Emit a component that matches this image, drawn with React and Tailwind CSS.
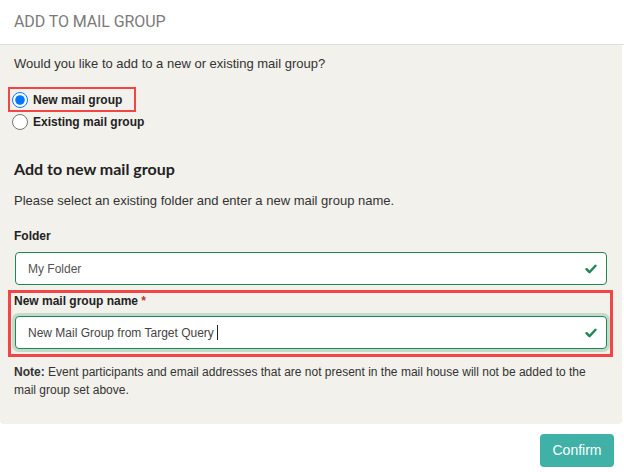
export default function App() {
  const check = (
    <svg width="12" height="10" viewBox="0 0 12 10" className="shrink-0">
      <path d="M1.5 5.2 L4.5 8.2 L10.5 1.8" fill="none" stroke="#1e8755" strokeWidth="2.4" strokeLinecap="round" strokeLinejoin="round" />
    </svg>
  );
  return (
    <div className="w-[624px] h-[472px] bg-white flex flex-col text-[#333] font-['Liberation_Sans',Arial,sans-serif]">
      <div className="h-[45px] shrink-0 border-b border-[#dedede] px-[14px] flex items-center">
        <span className="text-[16px] text-[#7b7b7b] font-['Roboto',sans-serif] tracking-[-0.1px]">ADD TO MAIL GROUP</span>
      </div>
      <div className="h-[379px] w-[622px] shrink-0 bg-[#f2f1ec] rounded-b-[4px] px-[14px] pt-[10px]">
        <div className="text-[13px] leading-[18px]">Would you like to add to a new or existing mail group?</div>
        <div className="mt-[14px] flex flex-col">
          <div className="self-start -ml-[6px] h-[25px] w-[128px] border-2 border-[#f24545] pl-[2px] flex items-center">
            <input type="radio" checked readOnly className="m-0 w-[16px] h-[16px]" />
            <span className="ml-[5px] text-[12px] font-bold text-[#222]">New mail group</span>
          </div>
          <div className="h-[20px] -ml-[2px] flex items-center">
            <input type="radio" checked={false} readOnly className="m-0 w-[16px] h-[16px]" />
            <span className="ml-[5px] text-[12px] font-bold text-[#222]">Existing mail group</span>
          </div>
        </div>
        <div className="mt-[27px] text-[16px] leading-[20px] font-bold font-['Lato',sans-serif] text-[#222]">Add to new mail group</div>
        <div className="mt-[13px] text-[13px] leading-[18px]">Please select an existing folder and enter a new mail group name.</div>
        <div className="mt-[18px] text-[12px] leading-[16px] font-bold text-[#222]">Folder</div>
        <div className="mt-[8px] ml-[1px] w-[592px] h-[33px] bg-white border border-[#1e8755] rounded-[4px] pl-[12px] pr-[9px] flex items-center justify-between">
          <span className="text-[12px] text-[#555]">My Folder</span>
          {check}
        </div>
        <div className="mt-[5px] -ml-[6px] w-[605px] border-[3px] border-[#f24545] pb-[5px]">
          <div className="pl-[3px] text-[12px] leading-[16px] font-bold text-[#222]">
            New mail group name <span className="text-[#c0392b]">*</span>
          </div>
          <div className="mt-[7px] ml-[4px] w-[592px] h-[33px] bg-white border border-[#1e8755] rounded-[4px] pl-[12px] pr-[9px] flex items-center justify-between shadow-[0_0_0_3px_rgba(30,135,85,0.22)]">
            <span className="text-[12px] text-[#444] flex items-center">
              New Mail Group from Target Query
              <span className="ml-[3px] inline-block w-px h-[15px] bg-[#222]"></span>
            </span>
            {check}
          </div>
        </div>
        <div className="mt-[6px] text-[12px] leading-[18px] text-[#333]">
          <span className="font-bold">Note:</span> Event participants and email addresses that are not present in the mail house will not be added to the mail group set above.
        </div>
      </div>
      <div className="flex justify-end pt-[10px] pr-[10px]">
        <button className="w-[74px] h-[33px] rounded-[4px] bg-[#40b1a6] text-white text-[14px]">Confirm</button>
      </div>
    </div>
  );
}
